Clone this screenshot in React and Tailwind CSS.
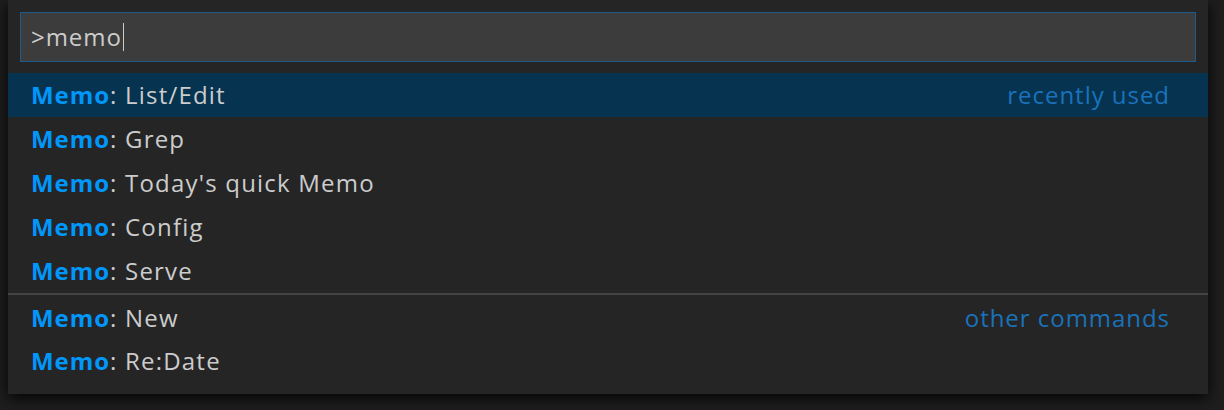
import React from 'react';

const rows = [
    { name: 'List/Edit', label: 'recently used', selected: true },
    { name: 'Grep' },
    { name: "Today's quick Memo" },
    { name: 'Config' },
    { name: 'Serve' },
    { name: 'New', label: 'other commands', separator: true },
    { name: 'Re:Date' },
];

const App = () => {
    return (
        <div
            className="w-full h-[410px] bg-[#1e1e1e] pl-2 overflow-hidden"
            style={{ fontFamily: '"Open Sans", "Noto Sans", sans-serif' }}
        >
            <div className="w-[1200px] h-[394px] bg-[#252526] shadow-[0_4px_14px_rgba(0,0,0,0.9)] flex flex-col">
                <div className="px-3 pt-3">
                    <div className="h-[50px] bg-[#3c3c3c] border border-[#1d5a8a] flex items-center pl-[10px] text-[24px] tracking-[0.04em] text-[#cccccc]">
                        <span>&gt;memo</span>
                        <span className="w-px h-[28px] bg-[#cccccc] ml-px" />
                    </div>
                </div>
                <div className="mt-[11px] flex flex-col">
                    {rows.map((row) => (
                        <div
                            key={row.name}
                            className={`h-[44px] flex items-center justify-between pl-[23px] pr-[38px] text-[24px] tracking-[0.05em] ${
                                row.selected ? 'bg-[#063350]' : ''
                            } ${row.separator ? 'border-t-2 border-[#434346] h-[46px] pt-[2px]' : ''}`}
                        >
                            <span className="text-[#cccccc]">
                                <span className="font-bold tracking-[0.04em] text-[#0097fb]">Memo</span>: {row.name}
                            </span>
                            {row.label && <span className="text-[#1a72bb] tracking-[0.04em]">{row.label}</span>}
                        </div>
                    ))}
                </div>
            </div>
        </div>
    );
};

export default App;
